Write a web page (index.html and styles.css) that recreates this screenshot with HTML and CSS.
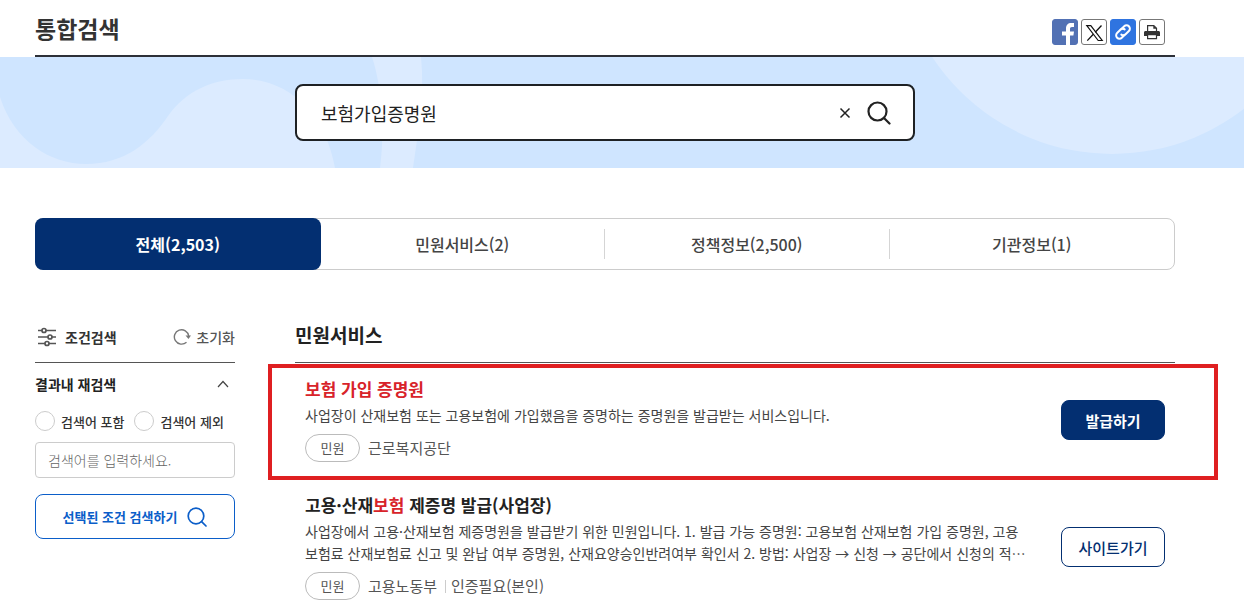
FILE: index.html
```html
<!DOCTYPE html>
<html lang="ko">
<head>
  <meta charset="UTF-8">
  <meta name="viewport" content="width=device-width, initial-scale=1.0">
  <title>통합검색</title>
  <link rel="stylesheet" href="styles.css">
</head>
<body>

  <header class="page-header">
    <h1>통합검색</h1>
    <div class="share">
      <button type="button" class="share-btn facebook" aria-label="페이스북 공유">
        <svg viewBox="0 0 26 26"><path fill="#fff" d="M14 26V16.500h-4v-4h4V9.500C14 6 16 4 19.200 4H22v4h-2c-1.500 0-2 .7-2 2v2.500h4l-.6 4H18V26z"/></svg>
      </button>
      <button type="button" class="share-btn" aria-label="X 공유">
        <svg viewBox="0 0 26 26" fill="none" stroke="#111"><path stroke-width="1.200" d="M5.800 6.600h4L21.200 21.500h-4z"/><path stroke-width="1.300" d="M20.500 6.500l-6.300 6.800M12.300 15.200l-6 6.400"/></svg>
      </button>
      <button type="button" class="share-btn link" aria-label="링크 복사">
        <svg viewBox="0 0 26 26" fill="none" stroke="#fff" stroke-width="2" stroke-linecap="round"><path d="M11.500 10l2.700-2.700a3.300 3.300 0 0 1 4.700 4.700l-3.300 3.300a3.300 3.300 0 0 1-4.300.3"/><path d="M14.500 16l-2.700 2.700a3.300 3.300 0 0 1-4.700-4.700l3.300-3.300a3.300 3.300 0 0 1 4.300-.3"/></svg>
      </button>
      <button type="button" class="share-btn" aria-label="인쇄">
        <svg viewBox="0 0 26 26"><path fill="#fff" stroke="#333" stroke-width="1.200" d="M8.600 12.500V6.600h6.200l2.700 2.700v3.200"/><path fill="#333" d="M14.300 6.500v3.300h3.300zM6.500 12h13c.9 0 1.500.6 1.500 1.500V17H5v-3.500c0-.9.600-1.500 1.500-1.500z"/><path fill="#fff" stroke="#333" stroke-width="1.200" d="M8.600 15.600h8.900v4H8.600z"/></svg>
      </button>
    </div>
  </header>

  <section class="banner">
    <svg class="banner-bg" viewBox="0 0 1244 111" preserveAspectRatio="none" aria-hidden="true">
      <g fill="#dcebff">
        <path d="M0 40C14 84 50 107 86 107C124 107 150 86 168 59C186 34 212 22 243 22C290 22 326 58 335 111H0z"/>
        <path d="M372 0C382 30 385 75 380 111H413C418 76 425 38 421 0z"/>
        <circle cx="1112" cy="-118" r="215"/>
      </g>
    </svg>
    <form class="search" role="search">
      <input type="text" value="보험가입증명원" aria-label="검색어">
      <button type="button" class="clear" aria-label="지우기">
        <svg viewBox="0 0 12 12" fill="none" stroke="#222" stroke-width="1.500"><path d="M1.500 1.500l9 9M10.500 1.500l-9 9"/></svg>
      </button>
      <button type="button" class="find" aria-label="검색">
        <svg viewBox="0 0 24 24" fill="none" stroke="#222" stroke-width="2.200" stroke-linecap="round"><circle cx="10.500" cy="10.500" r="9"/><path d="M17 17l5.500 5.500"/></svg>
      </button>
    </form>
  </section>

  <nav class="tabs">
    <a href="#all" class="active">전체(2,503)</a>
    <a href="#service">민원서비스(2)</a>
    <a href="#policy">정책정보(2,500)</a>
    <a href="#org">기관정보(1)</a>
  </nav>

  <div class="content">
    <aside class="filter">
      <div class="filter-head">
        <h2>
          <svg viewBox="0 0 20 20" fill="none" stroke="#555" stroke-width="1.700"><path d="M1 3.500h4M9 3.500h10M1 10h10M15 10h4M1 16.500h7M12 16.500h7"/><circle cx="7" cy="3.500" r="2"/><circle cx="13" cy="10" r="2"/><circle cx="10" cy="16.500" r="2"/></svg>
          조건검색
        </h2>
        <button type="button" class="reset">
          <svg viewBox="0 0 18 18" fill="none" stroke="#777" stroke-width="1.400"><path d="M13.500 14.200A7.200 7.200 0 1 1 15.700 8"/><path fill="#777" stroke="none" d="M12.500 7.500h5.500l-2.500 3.500z"/></svg>
          초기화
        </button>
      </div>
      <button type="button" class="fold" aria-expanded="true">
        결과내 재검색
        <svg viewBox="0 0 12 8" fill="none" stroke="#444" stroke-width="1.200"><path d="M1 7l5-5.500L11 7"/></svg>
      </button>
      <div class="radios">
        <label><input type="radio" name="word">검색어 포함</label>
        <label><input type="radio" name="word">검색어 제외</label>
      </div>
      <input type="text" class="word" placeholder="검색어를 입력하세요." aria-label="결과내 검색어">
      <button type="button" class="apply">
        선택된 조건 검색하기
        <svg viewBox="0 0 20 20" fill="none" stroke="#0b5ec9" stroke-width="1.700" stroke-linecap="round"><circle cx="9" cy="9" r="7.800"/><path d="M14.600 14.600l4.400 4.400"/></svg>
      </button>
    </aside>

    <main class="results">
      <h2>민원서비스</h2>
      <article class="item marked">
        <div class="info">
          <h3><a href="#item1"><em>보험 가입 증명원</em></a></h3>
          <p>사업장이 산재보험 또는 고용보험에 가입했음을 증명하는 증명원을 발급받는 서비스입니다.</p>
          <div class="meta"><span class="badge">민원</span><span>근로복지공단</span></div>
        </div>
        <button type="button" class="go primary">발급하기</button>
      </article>
      <article class="item">
        <div class="info">
          <h3><a href="#item2">고용·산재<em>보험</em> 제증명 발급(사업장)</a></h3>
          <p>사업장에서 고용·산재보험 제증명원을 발급받기 위한 민원입니다. 1. 발급 가능 증명원: 고용보험 산재보험 가입 증명원, 고용<br>보험료 산재보험료 신고 및 완납 여부 증명원, 산재요양승인반려여부 확인서 2. 방법: 사업장 → 신청 → 공단에서 신청의 적⋯</p>
          <div class="meta"><span class="badge">민원</span><span>고용노동부</span><span class="auth">인증필요(본인)</span></div>
        </div>
        <button type="button" class="go">사이트가기</button>
      </article>
    </main>
  </div>

</body>
</html>
```

FILE: styles.css
```css
* {
  box-sizing: border-box;
}

body {
  margin: 0;
  background: #fff;
  color: #222;
  font-family: "Noto Sans CJK KR", "Noto Sans", sans-serif;
  font-size: 14px;
}

h1, h2, h3, p {
  margin: 0;
}

a {
  color: inherit;
  text-decoration: none;
}

button, input {
  font: inherit;
  color: inherit;
}

button {
  padding: 0;
  border: 0;
  background: none;
  cursor: pointer;
}

svg {
  display: block;
  flex-shrink: 0;
}

.page-header, .tabs, .content {
  margin: 0 69px 0 35px;
}

.page-header {
  display: flex;
  justify-content: space-between;
  align-items: center;
  height: 57px;
  padding: 8px 10px 0 0;
  border-bottom: 2px solid #2d3038;
}

.page-header h1 {
  font-size: 23px;
  line-height: 32px;
  padding-bottom: 8px;
  color: #333;
}

.share {
  display: flex;
  gap: 3px;
}

.share-btn {
  width: 26px;
  height: 26px;
  border: 1px solid #777;
  border-radius: 3px;
}

.share-btn svg {
  width: 26px;
  height: 26px;
  margin: -1px;
}

.facebook {
  background: #5271b4;
  border-color: #5271b4;
}

.link {
  background: #2f74e0;
  border-color: #2f74e0;
}

/* search banner */
.banner {
  position: relative;
  padding: 27px 69px 27px 35px;
  background: #cfe5ff;
}

.banner-bg {
  position: absolute;
  top: 0;
  left: 0;
  width: 100%;
  height: 100%;
}

.search {
  position: relative;
  display: flex;
  align-items: center;
  max-width: 620px;
  height: 57px;
  margin: 0 auto;
  padding: 0 22px 0 24px;
  border: 2px solid #1e2124;
  border-radius: 8px;
  background: #fff;
}

.search input {
  flex: 1;
  min-width: 0;
  padding: 0;
  border: 0;
  outline: 0;
  font-size: 18px;
}

.clear svg {
  width: 12px;
  height: 12px;
}

.find {
  margin-left: 16px;
}

.find svg {
  width: 24px;
  height: 24px;
}

/* tabs */
.tabs {
  display: grid;
  grid-template-columns: repeat(4, 1fr);
  height: 52px;
  margin-top: 50px;
  border: 1px solid #ccc;
  border-radius: 8px;
}

.tabs a {
  display: flex;
  align-items: center;
  justify-content: center;
  margin: 10px 0;
  border-right: 1px solid #d5d5d5;
  color: #444;
  font-size: 16px;
  font-weight: 500;
}

.tabs a:last-child {
  border-right: 0;
}

.tabs .active {
  margin: -1px 0 -1px -1px;
  border: 0;
  border-radius: 8px;
  background: #032f71;
  color: #fff;
  font-weight: 700;
}

/* content */
.content {
  display: flex;
  gap: 60px;
  margin-top: 50px;
}

.filter {
  width: 200px;
  flex-shrink: 0;
}

.filter-head {
  display: flex;
  justify-content: space-between;
  align-items: center;
  height: 43px;
  padding-bottom: 8px;
  border-bottom: 1px solid #555;
}

.filter-head h2 {
  display: flex;
  align-items: center;
  gap: 8px;
  padding-left: 2px;
  font-size: 14px;
  color: #333;
}

.filter-head h2 svg {
  width: 20px;
  height: 20px;
}

.reset {
  display: flex;
  align-items: center;
  gap: 5px;
  color: #555;
  font-weight: 500;
}

.reset svg {
  width: 18px;
  height: 18px;
}

.fold {
  display: flex;
  justify-content: space-between;
  align-items: center;
  width: 100%;
  height: 42px;
  padding-right: 6px;
  font-weight: 700;
}

.fold svg {
  width: 12px;
  height: 8px;
}

.radios {
  display: flex;
  gap: 10px;
  height: 32px;
}

.radios label {
  display: flex;
  align-items: center;
  gap: 6px;
  font-size: 13px;
  font-weight: 500;
  color: #333;
  white-space: nowrap;
}

.radios input {
  appearance: none;
  width: 20px;
  height: 20px;
  margin: 0;
  border: 1px solid #ccc;
  border-radius: 50%;
}

.radios input:checked {
  border: 6px solid #0b5ec9;
}

.word {
  display: block;
  width: 100%;
  height: 36px;
  margin-top: 5px;
  padding: 0 12px;
  border: 1px solid #ccc;
  border-radius: 4px;
}

.word::placeholder {
  color: #666;
  font-weight: 300;
}

.apply {
  display: flex;
  align-items: center;
  justify-content: center;
  gap: 10px;
  width: 100%;
  height: 45px;
  margin-top: 16px;
  border: 1px solid #0b5ec9;
  border-radius: 8px;
  color: #0b5ec9;
  font-size: 13px;
  font-weight: 700;
}

.apply svg {
  width: 20px;
  height: 20px;
}

.results {
  flex: 1;
  min-width: 0;
}

.results h2 {
  height: 43px;
  border-bottom: 1px solid #555;
  font-size: 19px;
  line-height: 30px;
}

.item {
  position: relative;
  display: flex;
  align-items: center;
  gap: 20px;
  padding: 13px 10px 17px;
}

.item:last-child {
  padding-bottom: 0;
}

/* red frame around the service to pick */
.marked::after {
  content: "";
  position: absolute;
  inset: 1px -43px -1px -27px;
  border: 4px solid #df1f21;
  pointer-events: none;
}

.info {
  flex: 1;
  min-width: 0;
}

.info h3 {
  font-size: 17px;
  line-height: 26px;
}

.info em {
  color: #d8232a;
  font-style: normal;
}

.info p {
  margin-top: 2px;
  color: #444;
  line-height: 22px;
}

.meta {
  display: flex;
  align-items: center;
  gap: 8px;
  margin-top: 8px;
  color: #555;
  font-size: 15px;
  line-height: 20px;
}

.badge {
  width: 55px;
  height: 28px;
  border: 1px solid #bbb;
  border-radius: 14px;
  font-size: 13px;
  line-height: 26px;
  text-align: center;
}

.auth {
  position: relative;
  padding-left: 6px;
}

.auth::before {
  content: "";
  position: absolute;
  top: 4px;
  left: 0;
  height: 13px;
  border-left: 1px solid #ccc;
}

.go {
  width: 104px;
  height: 40px;
  margin-top: 2px;
  border: 1px solid #032f71;
  border-radius: 8px;
  color: #032f71;
  font-size: 15px;
  font-weight: 500;
}

.primary {
  background: #032f71;
  color: #fff;
  font-weight: 700;
}
```
